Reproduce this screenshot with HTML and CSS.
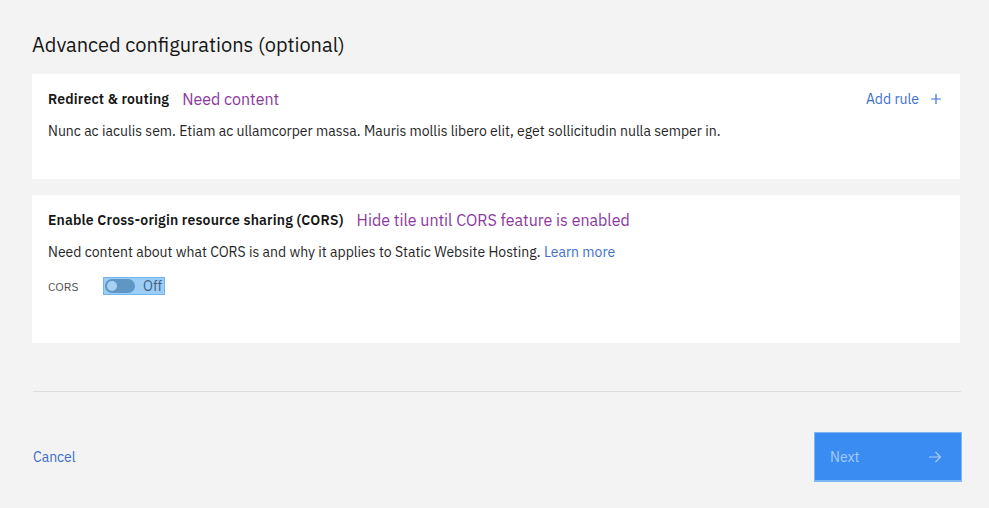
FILE: index.html
```html
<!DOCTYPE html>
<html lang="en">
<head>
<meta charset="utf-8">
<title>Advanced configurations</title>
<link rel="stylesheet" href="styles.css">
</head>
<body>
<main class="page">
  <h2 class="page-title">Advanced configurations (optional)</h2>

  <section class="tile tile-redirect">
    <div class="tile-head">
      <div class="tile-titles">
        <h3 class="tile-title">Redirect &amp; routing</h3>
        <span class="note">Need content</span>
      </div>
      <a class="add-rule" href="#">Add rule
        <svg class="plus" width="12" height="12" viewBox="0 0 12 12" aria-hidden="true"><path d="M6 1v10M1 6h10" stroke="currentColor" stroke-width="1.2" fill="none"/></svg>
      </a>
    </div>
    <p class="tile-desc">Nunc ac iaculis sem. Etiam ac ullamcorper massa. Mauris mollis libero elit, eget sollicitudin nulla semper in.</p>
  </section>

  <section class="tile tile-cors">
    <div class="tile-head">
      <div class="tile-titles">
        <h3 class="tile-title">Enable Cross-origin resource sharing (CORS)</h3>
        <span class="note">Hide tile until CORS feature is enabled</span>
      </div>
    </div>
    <p class="tile-desc">Need content about what CORS is and why it applies to Static Website Hosting. <a class="link" href="#">Learn more</a></p>
    <div class="toggle-row">
      <span class="toggle-label">CORS</span>
      <span class="toggle-sel">
        <span class="toggle-track"><span class="toggle-knob"></span></span>
        <span class="toggle-text">Off</span>
      </span>
    </div>
  </section>

  <hr class="divider">

  <footer class="actions">
    <a class="cancel" href="#">Cancel</a>
    <button class="next" type="button">Next
      <svg class="arrow" width="14" height="12" viewBox="0 0 14 12" aria-hidden="true"><path d="M1 6h11.5M7.5 1l5 5-5 5" stroke="currentColor" stroke-width="1.2" fill="none"/></svg>
    </button>
  </footer>
</main>
</body>
</html>
```

FILE: styles.css
```css
html, body {
  margin: 0;
  padding: 0;
  background: #f3f3f3;
}
body {
  font-family: "IBM Plex Sans", "Noto Sans", "Open Sans", sans-serif;
  color: #161616;
}
.page {
  padding: 0 29px 0 32px;
  display: flex;
  flex-direction: column;
}
.page-title {
  margin: 31px 0 15px 0;
  font-size: 20px;
  line-height: 28px;
  font-weight: 400;
  color: #161616;
}
.tile {
  background: #ffffff;
  padding: 16px 16px 0;
}
.tile-redirect {
  height: 105px;
  box-sizing: border-box;
}
.tile-cors {
  margin-top: 16px;
  height: 148px;
  box-sizing: border-box;
}
.tile-head {
  display: flex;
  justify-content: space-between;
  align-items: center;
  height: 18px;
}
.tile-titles {
  display: flex;
  align-items: center;
  gap: 13px;
}
.tile-title {
  margin: 0;
  font-size: 14px;
  font-weight: 600;
  line-height: 18px;
  letter-spacing: 0.18px;
}
.note {
  font-size: 16px;
  line-height: 18px;
  color: #8b3a9e;
}
.add-rule {
  display: flex;
  align-items: center;
  gap: 11px;
  margin-right: 2px;
  font-size: 14px;
  color: #3d6fd1;
  text-decoration: none;
}
.plus {
  display: block;
}
.tile-desc {
  margin: 13px 0 0;
  font-size: 14px;
  line-height: 20px;
  color: #262626;
}
.link {
  color: #3d6fd1;
  text-decoration: none;
}
.toggle-row {
  margin-top: 15px;
  display: flex;
  align-items: center;
  height: 18px;
}
.toggle-label {
  width: 55px;
  font-size: 12px;
  color: #525252;
}
.toggle-sel {
  display: flex;
  align-items: center;
  gap: 8px;
  height: 18px;
  padding: 0 2px;
  background: #9ccdf6;
  box-shadow: inset 0 0 0 1px #74b3ee;
}
.toggle-track {
  width: 30px;
  height: 14px;
  border-radius: 7px;
  background: #6096c3;
  display: flex;
  align-items: center;
  padding-left: 2px;
  box-sizing: border-box;
}
.toggle-knob {
  width: 10px;
  height: 10px;
  border-radius: 50%;
  background: #a7d2f3;
}
.toggle-text {
  font-size: 14px;
  color: #3f5f80;
  padding-right: 1px;
}
.divider {
  margin: 48px -1px 0 1px;
  border: 0;
  border-top: 1px solid #dcdcdc;
  height: 0;
}
.actions {
  display: flex;
  justify-content: space-between;
  align-items: center;
  margin-top: 40px;
}
.cancel {
  margin-left: 1px;
  font-size: 14px;
  color: #3d6fd1;
  text-decoration: none;
}
.next {
  width: 148px;
  height: 50px;
  margin-right: -2px;
  box-sizing: border-box;
  display: flex;
  align-items: center;
  justify-content: space-between;
  padding: 0 19px 0 15px;
  background: #3a8cf3;
  border: 1px solid #7cb6f5;
  border-bottom-width: 2px;
  color: #a5cdf7;
  font-family: inherit;
  font-size: 14px;
  cursor: pointer;
}
.arrow {
  display: block;
}
```
